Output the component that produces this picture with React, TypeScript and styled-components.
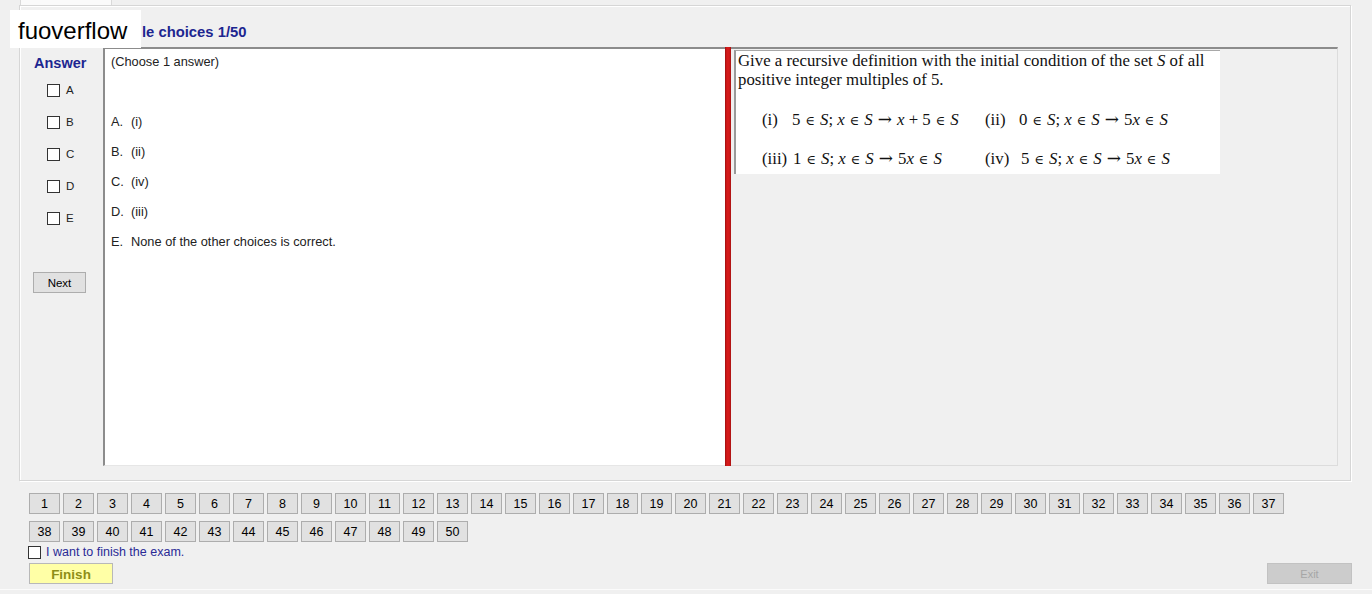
import styled, { createGlobalStyle } from "styled-components";

const GlobalStyle = createGlobalStyle`
  html, body {
    margin: 0;
    padding: 0;
    background: #f0f0f0;
  }
  body {
    font-family: "Liberation Sans", Arial, sans-serif;
  }
`;

const Page = styled.div`
  position: relative;
  width: 1372px;
  height: 594px;
  overflow: hidden;
  background: #f0f0f0;
  color: #000;
  font-size: 12px;
`;

const TabStrip = styled.div`
  display: flex;
  height: 5px;
  padding-left: 20px;
`;

const Tab = styled.div`
  width: 90px;
  background: #fafafa;
  border-left: 1px solid #d9d9d9;
  border-right: 1px solid #d9d9d9;
`;

const Group = styled.div`
  display: flex;
  flex-direction: column;
  margin-left: 19px;
  width: 1330px;
  height: 474px;
  border: 1px solid #d6d6d6;
  box-shadow: inset 1px 1px 0 #fff, 1px 1px 0 #fff;
`;

// the start of the title sits under the watermark
const Title = styled.div`
  padding: 18px 0 0 122px;
  height: 16px;
  line-height: 16px;
  font-size: 14.8px;
  font-weight: bold;
  color: #1d2690;
`;

const Content = styled.div`
  display: flex;
  margin-top: 7px;
  margin-right: 12px;
  height: 419px;
`;

const AnswerCol = styled.div`
  display: flex;
  flex-direction: column;
  width: 83px;
  flex-shrink: 0;
`;

const AnswerLabel = styled.div`
  padding: 8px 0 0 14px;
  line-height: 16px;
  font-size: 14.5px;
  font-weight: bold;
  color: #1d2690;
`;

const CheckList = styled.div`
  margin-top: 3px;
  display: flex;
  flex-direction: column;
`;

const CheckRow = styled.label`
  display: flex;
  align-items: center;
  gap: 6px;
  height: 32px;
  padding-left: 27px;
  font-size: 11.5px;
  color: #222;
`;

const Box = styled.span`
  display: inline-block;
  width: 11px;
  height: 11px;
  background: #fff;
  border: 1px solid #333;
`;

const WinButton = styled.button<{ $w: number }>`
  width: ${(p) => p.$w}px;
  height: 21px;
  padding: 0;
  background: #e1e1e1;
  border: 1px solid #adadad;
  font-family: "Liberation Sans", Arial, sans-serif;
  font-size: 12.5px;
  color: #000;
  text-align: center;
`;

const NextButton = styled(WinButton)`
  margin: 38px 0 0 13px;
  font-size: 11.5px;
`;

const AnswerBox = styled.div`
  box-sizing: border-box;
  width: 622px;
  flex-shrink: 0;
  background: #fff;
  border-top: 2px solid #8c8c8c;
  border-left: 2px solid #8c8c8c;
  border-bottom: 1px solid #e6e6e6;
  padding: 5px 0 0 6px;
  font-size: 12.8px;
  color: #222;
`;

const Hint = styled.div`
  line-height: 16px;
`;

const Options = styled.div`
  margin-top: 37px;
`;

const Option = styled.div`
  display: flex;
  height: 30px;
  line-height: 30px;
`;

const OptKey = styled.span`
  width: 20px;
`;

const Splitter = styled.div`
  width: 6px;
  flex-shrink: 0;
  background: linear-gradient(to right, #9c0f0f, #d41a1a 30%, #d41a1a 70%, #a51212);
`;

const QuestionPane = styled.div`
  flex: 1;
  box-sizing: border-box;
  border-top: 2px solid #8c8c8c;
  border-right: 1px solid #dcdcdc;
  border-bottom: 1px solid #dcdcdc;
  padding: 1px 0 0 3px;
`;

const QuestionImage = styled.div`
  box-sizing: border-box;
  width: 486px;
  height: 124px;
  background: #fff;
  border-left: 2px solid #9a9a9a;
  border-top: 1px solid #a8a8a8;
  padding-left: 2px;
  font-family: "Liberation Serif", "Times New Roman", serif;
  font-size: 16.8px;
  line-height: 19px;
  color: #111;
`;

const Formulas = styled.div`
  display: grid;
  grid-template-columns: 223px auto;
  grid-auto-rows: 39px;
  align-items: center;
  margin: 11px 0 0 24px;
  white-space: nowrap;
`;

const Tag = styled.span<{ $w: number }>`
  display: inline-block;
  width: ${(p) => p.$w}px;
`;

const Sym = styled.span<{ $size: number }>`
  font-family: "DejaVu Serif", serif;
  font-size: ${(p) => p.$size}px;
  margin: 0 5px;
`;

const Bottom = styled.div`
  box-sizing: border-box;
  height: 109px;
  padding: 12px 20px 0 29px;
  border-bottom: 1px solid #fbfbfb;
`;

const NumGrid = styled.div`
  display: flex;
  flex-wrap: wrap;
  width: 1258px;
  gap: 7px 3px;
`;

const FinishCheck = styled.label`
  display: flex;
  align-items: center;
  gap: 5px;
  margin: 3px 0 0 -1px;
  height: 14px;
  font-size: 12.5px;
  color: #2a2a96;
`;

const FooterRow = styled.div`
  display: flex;
  justify-content: space-between;
  margin-top: 4px;
`;

const FinishButton = styled(WinButton)`
  background: #ffffa6;
  border-color: #b8b8b8;
  font-size: 13.5px;
  font-weight: bold;
  color: #8e8e18;
  padding-top: 2px;
`;

const ExitButton = styled(WinButton)`
  background: #cccccc;
  border-color: #c2c2c2;
  font-size: 11px;
  color: #a6a6a6;
`;

const Watermark = styled.div`
  position: absolute;
  top: 10px;
  left: 10px;
  width: 131px;
  height: 38px;
  box-sizing: border-box;
  padding-left: 8px;
  background: #fff;
  font-family: "Liberation Sans", Arial, sans-serif;
  font-size: 24px;
  line-height: 42px;
  color: #000;
`;

const letters = ["A", "B", "C", "D", "E"];
const options = [
  ["A.", "(i)"],
  ["B.", "(ii)"],
  ["C.", "(iv)"],
  ["D.", "(iii)"],
  ["E.", "None of the other choices is correct."],
];
const numbers = Array.from({ length: 50 }, (_, i) => i + 1);

const S = () => <i>S</i>;
const X = () => <i>x</i>;
const In = () => <Sym $size={13}>∈</Sym>;
const To = () => <Sym $size={17}>→</Sym>;

export default function App() {
  return (
    <Page>
      <GlobalStyle />
      <TabStrip>
        <Tab />
      </TabStrip>
      <Group>
        <Title>le choices 1/50</Title>
        <Content>
          <AnswerCol>
            <AnswerLabel>Answer</AnswerLabel>
            <CheckList>
              {letters.map((l) => (
                <CheckRow key={l}>
                  <Box />
                  {l}
                </CheckRow>
              ))}
            </CheckList>
            <NextButton $w={53}>Next</NextButton>
          </AnswerCol>
          <AnswerBox>
            <Hint>(Choose 1 answer)</Hint>
            <Options>
              {options.map(([k, t]) => (
                <Option key={k}>
                  <OptKey>{k}</OptKey>
                  {t}
                </Option>
              ))}
            </Options>
          </AnswerBox>
          <Splitter />
          <QuestionPane>
            <QuestionImage>
              Give a recursive definition with the initial condition of the set <S /> of all
              <br />
              positive integer multiples of 5.
              <Formulas>
                <span>
                  <Tag $w={30}>(i)</Tag>5<In /><S />; <X /><In /><S /><To /><X /> + 5<In /><S />
                </span>
                <span>
                  <Tag $w={34}>(ii)</Tag>0<In /><S />; <X /><In /><S /><To />5<X /><In /><S />
                </span>
                <span>
                  <Tag $w={31}>(iii)</Tag>1<In /><S />; <X /><In /><S /><To />5<X /><In /><S />
                </span>
                <span>
                  <Tag $w={36}>(iv)</Tag>5<In /><S />; <X /><In /><S /><To />5<X /><In /><S />
                </span>
              </Formulas>
            </QuestionImage>
          </QuestionPane>
        </Content>
      </Group>
      <Bottom>
        <NumGrid>
          {numbers.map((n) => (
            <WinButton key={n} $w={31}>
              {n}
            </WinButton>
          ))}
        </NumGrid>
        <FinishCheck>
          <Box />
          I want to finish the exam.
        </FinishCheck>
        <FooterRow>
          <FinishButton $w={84}>Finish</FinishButton>
          <ExitButton $w={85}>Exit</ExitButton>
        </FooterRow>
      </Bottom>
      <Watermark>fuoverflow</Watermark>
    </Page>
  );
}
